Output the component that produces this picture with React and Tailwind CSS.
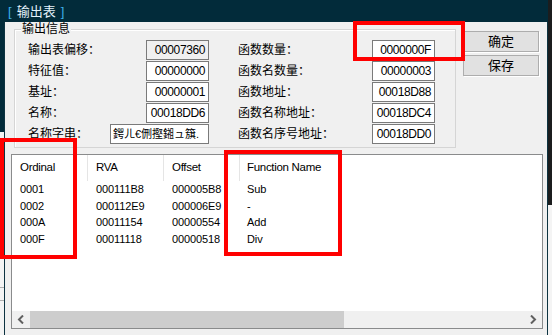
import React from "react";

const F = { fontFamily: '"Liberation Sans", "Noto Sans CJK SC", sans-serif' };

function Field({ value, ro, w = "w-[63px]", left }) {
  return (
    <div
      className={`${w} h-[20px] border border-[#7a7a7a] ${ro ? "bg-[#f0f0f0]" : "bg-white"} ${left ? "text-left pl-[2px] text-[11px]" : "text-right pr-[3px] text-[12px] tracking-[-0.4px]"} leading-[18px] text-black overflow-hidden whitespace-nowrap`}
    >
      {value}
    </div>
  );
}

function Row({ label, children, w }) {
  return (
    <div className={`flex items-center justify-between h-[20px] ${w}`}>
      <span className="text-[12px] leading-[14px] text-black">{label}</span>
      {children}
    </div>
  );
}

function Btn({ children }) {
  return (
    <div className="w-[76px] h-[21px] border border-[#adadad] bg-[#e1e1e1] shadow-[1px_1px_0_#ffffff] flex items-center justify-center text-[13px] leading-[15px] text-black">
      {children}
    </div>
  );
}

const rows = [
  ["0001", "000111B8", "000005B8", "Sub"],
  ["0002", "000112E9", "000006E9", "-"],
  ["000A", "00011154", "00000554", "Add"],
  ["000F", "00011118", "00000518", "Div"],
];

export default function App() {
  return (
    <div className="relative w-[552px] h-[335px] overflow-hidden bg-[#f0f0f0] flex flex-col" style={F}>
      {/* title bar */}
      <div className="h-[22px] bg-[#022b3a] flex items-center pl-[8px] text-[13px] leading-[15px] shrink-0">
        <span className="text-[#3fb0ea]">[</span>
        <span className="text-[#e4f2fb] ml-[5px]">输出表</span>
        <span className="text-[#3fb0ea] ml-[5px]">]</span>
        <div className="flex-1" />
        <div className="w-[4px] h-[22px] bg-[#1b1d1e]" />
      </div>
      <div className="flex flex-1">
        {/* left outside strip */}
        <div className="w-[4px] flex flex-col">
          <div className="h-[110px] bg-[#022b3a]" />
          <div className="flex-1 bg-[#f4f4f4] flex flex-col">
            <div className="h-[155px]" />
            <div className="h-[1px] bg-[#b0b0b0]" />
            <div className="h-[12px]" />
            <div className="h-[1px] bg-[#b0b0b0]" />
          </div>
        </div>
        {/* window main */}
        <div className="w-[544px] border-l border-r border-[#0d3341] flex flex-col">
          <div className="flex items-start">
            {/* group box */}
            <div className="relative ml-[9px] mt-[7px] w-[442px] h-[119px] border border-[#d5d5d5] shadow-[inset_1px_1px_0_#ffffff]">
              <span className="absolute left-[6px] top-[-8px] px-[1px] bg-[#f0f0f0] text-[12px] leading-[14px] text-black">
                输出信息
              </span>
              <div className="flex pt-[10px] pl-[13px]">
                <div className="flex flex-col gap-[1px] w-[181px]">
                  <Row label="输出表偏移：" w="w-[181px]"><Field value="00007360" ro /></Row>
                  <Row label="特征值：" w="w-[181px]"><Field value="00000000" /></Row>
                  <Row label="基址：" w="w-[181px]"><Field value="00000001" /></Row>
                  <Row label="名称：" w="w-[181px]"><Field value="00018DD6" /></Row>
                  <Row label="名称字串：" w="w-[181px]"><Field value="鍔ㄦ€侀摼鎺ュ簱." w="w-[99px]" left /></Row>
                </div>
                <div className="flex flex-col gap-[1px] w-[197px] ml-[29px]">
                  <Row label="函数数量：" w="w-[197px]"><Field value="0000000F" /></Row>
                  <Row label="函数名数量：" w="w-[197px]"><Field value="00000003" /></Row>
                  <Row label="函数地址：" w="w-[197px]"><Field value="00018D88" /></Row>
                  <Row label="函数名称地址：" w="w-[197px]"><Field value="00018DC4" /></Row>
                  <Row label="函数名序号地址：" w="w-[197px]"><Field value="00018DD0" /></Row>
                </div>
              </div>
            </div>
            {/* buttons */}
            <div className="ml-[7px] mt-[9px] flex flex-col gap-[3px]">
              <Btn>确定</Btn>
              <Btn>保存</Btn>
            </div>
          </div>
          {/* list view */}
          <div className="ml-[6px] mt-[6px] w-[532px] h-[175px] border border-[#8a8b8c] bg-white flex flex-col">
            <div className="flex h-[26px] text-[11.5px] tracking-[-0.3px] text-black">
              {["Ordinal", "RVA", "Offset"].map((h) => (
                <div key={h} className="w-[76px] border-r border-[#e5e5e5] pl-[8px] flex items-center">
                  {h}
                </div>
              ))}
              <div className="pl-[7px] flex items-center">Function Name</div>
            </div>
            <div className="flex-1 flex flex-col text-[11px] tracking-[-0.1px] text-black">
              {rows.map((r) => (
                <div key={r[0]} className="flex h-[16.6px] items-center">
                  <div className="w-[76px] pl-[8px]">{r[0]}</div>
                  <div className="w-[76px] pl-[8px]">{r[1]}</div>
                  <div className="w-[76px] pl-[8px]">{r[2]}</div>
                  <div className="pl-[7px]">{r[3]}</div>
                </div>
              ))}
            </div>
            {/* horizontal scrollbar */}
            <div className="h-[17px] flex bg-[#f0f0f0]">
              <div className="w-[18px] flex items-center justify-center">
                <svg width="8" height="9" viewBox="0 0 8 9">
                  <path d="M6 0.5 L2 4.5 L6 8.5" stroke="#606060" strokeWidth="2" fill="none" />
                </svg>
              </div>
              <div className="w-[314px] bg-[#cdcdcd]" />
              <div className="flex-1" />
              <div className="w-[18px] flex items-center justify-center">
                <svg width="8" height="9" viewBox="0 0 8 9">
                  <path d="M2 0.5 L6 4.5 L2 8.5" stroke="#606060" strokeWidth="2" fill="none" />
                </svg>
              </div>
            </div>
          </div>
        </div>
        {/* right outside strip */}
        <div className="w-[4px] flex flex-col">
          <div className="h-[183px] bg-[#1b1d1e]" />
          <div className="flex-1 bg-[#f4f4f4]" />
        </div>
      </div>

      {/* red annotation boxes */}
      <div className="absolute left-[353px] top-[21px] w-[112px] h-[40px] border-4 border-[#ff0000]" />
      <div className="absolute left-[0px] top-[138px] w-[77px] h-[121px] border-4 border-[#ff0000]" />
      <div className="absolute left-[224px] top-[150px] w-[118px] h-[106px] border-4 border-[#ff0000]" />
    </div>
  );
}
